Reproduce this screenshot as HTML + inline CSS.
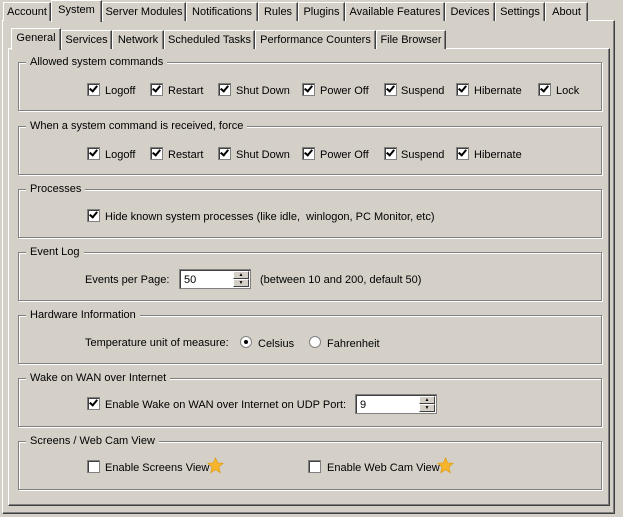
<!DOCTYPE html>
<html><head><style>
*{box-sizing:border-box;margin:0;padding:0}
body{width:623px;height:517px;background:#d4d0c8;font-family:"Liberation Sans",sans-serif;font-size:11px;color:#000;position:relative;overflow:hidden}
.a{position:absolute;white-space:nowrap;margin-top:1px}
.tab{position:absolute;height:19px;top:2px;border:1px solid #fff;border-right-color:#404040;border-bottom:none;box-shadow:inset -1px 0 #808080;padding:3px 0 0 0;text-align:center;white-space:nowrap;overflow:hidden;background:#d4d0c8}
.sel{top:0;height:22px;z-index:3;padding-top:3px}
.panel{position:absolute;border:1px solid #fff;border-right-color:#404040;border-bottom-color:#404040;box-shadow:inset -1px -1px #808080}
.grp{position:absolute;left:18px;width:584px;height:49px;border:1px solid #808080;box-shadow:1px 1px #fff,inset 1px 1px #fff}
.gt{position:absolute;left:26px;background:#d4d0c8;padding:0 4px;margin-top:-6px;line-height:13px}
.cb{position:absolute;width:13px;height:13px;background:#fff;border:1px solid #808080;box-shadow:inset 1px 1px #404040}
.cb.c::after{content:"";position:absolute;left:3px;top:0px;width:3px;height:6px;border:solid #000;border-width:0 2px 2px 0;transform:rotate(40deg)}
.rb{position:absolute;width:12px;height:12px;border-radius:50%;background:#fff;border:1px solid #808080}
.spin{position:absolute;height:20px;background:#fff;border:1px solid #808080;box-shadow:inset 1px 1px #404040;padding:4px 0 0 4px}
.sb{position:absolute;right:1px;width:16px;height:8px;background:#d4d0c8;border:1px solid #fff;border-right-color:#404040;border-bottom-color:#404040;font-size:5px;text-align:center;line-height:6px}
.star{position:absolute;width:17px;height:17px}
</style></head><body>
<div class="panel" style="left:2px;top:20px;width:613px;height:494px"></div>
<div class="tab" style="left:3px;width:48px">Account</div>
<div class="tab sel" style="left:51px;width:51px">System</div>
<div class="tab" style="left:102px;width:84px">Server Modules</div>
<div class="tab" style="left:186px;width:72px">Notifications</div>
<div class="tab" style="left:258px;width:40px">Rules</div>
<div class="tab" style="left:298px;width:47px">Plugins</div>
<div class="tab" style="left:345px;width:100px">Available Features</div>
<div class="tab" style="left:445px;width:50px">Devices</div>
<div class="tab" style="left:495px;width:50px">Settings</div>
<div class="tab" style="left:545px;width:43px">About</div>

<div class="panel" style="left:8px;top:48px;width:602px;height:458px"></div>
<div class="tab" style="left:61px;top:30px;width:51px">Services</div>
<div class="tab" style="left:112px;top:30px;width:52px">Network</div>
<div class="tab" style="left:164px;top:30px;width:91px">Scheduled Tasks</div>
<div class="tab" style="left:255px;top:30px;width:121px">Performance Counters</div>
<div class="tab" style="left:376px;top:30px;width:70px">File Browser</div>
<div class="tab sel" style="left:11px;top:28px;width:50px">General</div>

<div class="grp" style="top:62px"></div><div class="a gt" style="top:62px">Allowed system commands</div>
<div class="grp" style="top:126px"></div><div class="a gt" style="top:126px">When a system command is received, force</div>
<div class="grp" style="top:189px"></div><div class="a gt" style="top:189px">Processes</div>
<div class="grp" style="top:252px"></div><div class="a gt" style="top:252px">Event Log</div>
<div class="grp" style="top:315px"></div><div class="a gt" style="top:315px">Hardware Information</div>
<div class="grp" style="top:378px"></div><div class="a gt" style="top:378px">Wake on WAN over Internet</div>
<div class="grp" style="top:441px"></div><div class="a gt" style="top:441px">Screens / Web Cam View</div>

<div class="cb c" style="left:87px;top:83px"></div><div class="a" style="left:105px;top:84px">Logoff</div>
<div class="cb c" style="left:150px;top:83px"></div><div class="a" style="left:168px;top:84px">Restart</div>
<div class="cb c" style="left:218px;top:83px"></div><div class="a" style="left:236px;top:84px">Shut Down</div>
<div class="cb c" style="left:302px;top:83px"></div><div class="a" style="left:320px;top:84px">Power Off</div>
<div class="cb c" style="left:384px;top:83px"></div><div class="a" style="left:401px;top:84px">Suspend</div>
<div class="cb c" style="left:456px;top:83px"></div><div class="a" style="left:474px;top:84px">Hibernate</div>
<div class="cb c" style="left:538px;top:83px"></div><div class="a" style="left:556px;top:84px">Lock</div>

<div class="cb c" style="left:87px;top:147px"></div><div class="a" style="left:105px;top:148px">Logoff</div>
<div class="cb c" style="left:150px;top:147px"></div><div class="a" style="left:168px;top:148px">Restart</div>
<div class="cb c" style="left:218px;top:147px"></div><div class="a" style="left:236px;top:148px">Shut Down</div>
<div class="cb c" style="left:302px;top:147px"></div><div class="a" style="left:320px;top:148px">Power Off</div>
<div class="cb c" style="left:384px;top:147px"></div><div class="a" style="left:401px;top:148px">Suspend</div>
<div class="cb c" style="left:456px;top:147px"></div><div class="a" style="left:474px;top:148px">Hibernate</div>

<div class="cb c" style="left:87px;top:209px"></div><div class="a" style="left:105px;top:210px">Hide known system processes (like idle,&nbsp; winlogon, PC Monitor, etc)</div>

<div class="a" style="left:85px;top:273px">Events per Page:</div>
<div class="spin" style="left:179px;top:269px;width:72px">50<div class="sb" style="top:1px">▲</div><div class="sb" style="top:9px">▼</div></div>
<div class="a" style="left:260px;top:273px">(between 10 and 200, default 50)</div>

<div class="a" style="left:85px;top:336px">Temperature unit of measure:</div>
<div class="rb" style="left:240px;top:336px"><div style="position:absolute;left:3px;top:3px;width:4px;height:4px;border-radius:50%;background:#000"></div></div>
<div class="a" style="left:258px;top:337px">Celsius</div>
<div class="rb" style="left:309px;top:336px"></div>
<div class="a" style="left:327px;top:337px">Fahrenheit</div>

<div class="cb c" style="left:87px;top:397px"></div><div class="a" style="left:105px;top:398px">Enable Wake on WAN over Internet on UDP Port:</div>
<div class="spin" style="left:355px;top:394px;width:82px">9<div class="sb" style="top:1px">▲</div><div class="sb" style="top:9px">▼</div></div>

<div class="cb" style="left:87px;top:460px"></div><div class="a" style="left:105px;top:461px">Enable Screens View</div>
<svg class="star" style="left:207px;top:457px" viewBox="0 0 20 20"><polygon points="10,1 12.6,7 19,7.4 14,11.6 15.6,18.5 10,14.8 4.4,18.5 6,11.6 1,7.4 7.4,7" fill="#f7b52c" stroke="#e09a10" stroke-width="0.8"/></svg>
<div class="cb" style="left:308px;top:460px"></div><div class="a" style="left:327px;top:461px">Enable Web Cam View</div>
<svg class="star" style="left:437px;top:457px" viewBox="0 0 20 20"><polygon points="10,1 12.6,7 19,7.4 14,11.6 15.6,18.5 10,14.8 4.4,18.5 6,11.6 1,7.4 7.4,7" fill="#f7b52c" stroke="#e09a10" stroke-width="0.8"/></svg>
</body></html>
